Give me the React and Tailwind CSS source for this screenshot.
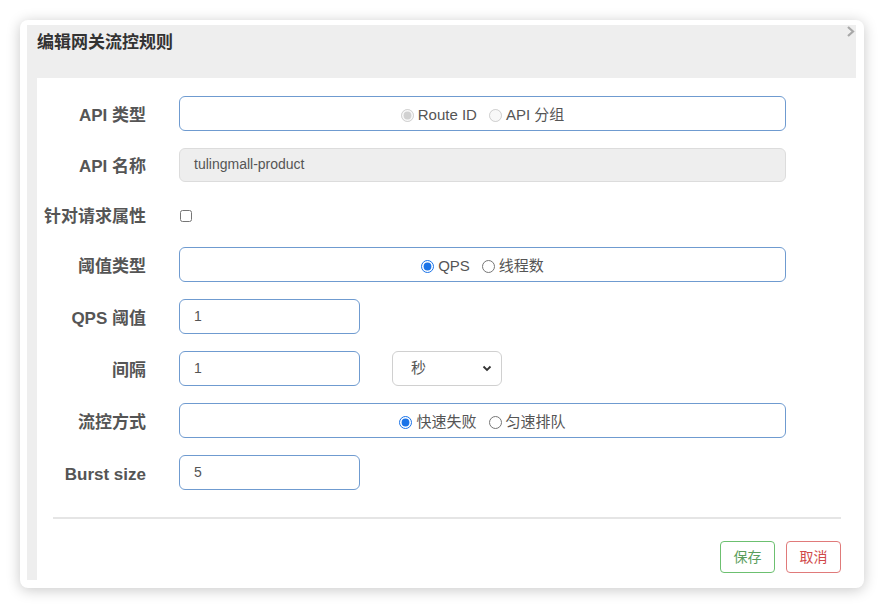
import React from "react";

const font = { fontFamily: '"Liberation Sans", Arial, "Noto Sans CJK SC", sans-serif' };

function Label({ children }) {
  return (
    <div className="w-[109px] shrink-0 text-right text-[17px] font-bold text-[#555] pt-[4px]">{children}</div>
  );
}

function Radio({ checked, disabled, label, name }) {
  return (
    <label className="flex items-center gap-[4px]">
      <input
        type="radio"
        name={name}
        defaultChecked={checked}
        disabled={disabled}
        className="w-[13px] h-[13px] m-0 accent-[#1a73e8]"
      />
      <span>{label}</span>
    </label>
  );
}

function RadioBox({ name, items }) {
  return (
    <div className="ml-[33px] w-[607px] h-[35px] rounded-[6px] border border-[#6f9bd0] flex items-center justify-center gap-[12px] pt-[3px] text-[15px] text-[#555]">
      {items.map((it, i) => (
        <Radio key={i} name={name} {...it} />
      ))}
    </div>
  );
}

function SmallInput({ value }) {
  return (
    <div className="ml-[33px] w-[181px] h-[35px] rounded-[6px] border border-[#6f9bd0] flex items-center pl-[14px] text-[14px] text-[#555]">
      {value}
    </div>
  );
}

export default function App() {
  return (
    <div className="w-[884px] h-[608px] bg-white pt-[20px] pl-[20px]" style={font}>
      <div className="w-[844px] h-[568px] bg-white rounded-[8px] shadow-[0_2px_14px_rgba(0,0,0,0.22)] overflow-hidden pt-[5px] pl-[7px]">
        <div className="relative w-[829px] h-[53px] bg-[#eeeeee] pl-[10px] pt-[6px] overflow-hidden">
          <div className="text-[17px] font-bold text-[#333] leading-[24px]">编辑网关流控规则</div>
          <svg className="absolute right-[1px] top-[1px]" width="8" height="11" viewBox="0 0 8 11">
            <path d="M1 1 L6 5.5 L1 10" fill="none" stroke="#a8a8a8" strokeWidth="2.2" />
          </svg>
        </div>
        <div className="flex">
          <div className="w-[10px] h-[502px] bg-[#eeeeee]" />
          <div className="flex-1 pt-[18px]">
            <div className="flex flex-col gap-[17px]">
              <div className="flex items-center h-[35px]">
                <Label>API 类型</Label>
                <RadioBox
                  name="apiType"
                  items={[
                    { label: "Route ID", checked: true, disabled: true },
                    { label: "API 分组", disabled: true },
                  ]}
                />
              </div>
              <div className="flex items-center h-[34px]">
                <Label>API 名称</Label>
                <div className="ml-[33px] w-[607px] h-[34px] rounded-[6px] border border-[#dcdcdc] bg-[#eeeeee] flex items-center pl-[14px] pb-[2px] text-[14px] text-[#555]">
                  tulingmall-product
                </div>
              </div>
              <div className="flex items-center h-[31px]">
                <Label>针对请求属性</Label>
                <input type="checkbox" className="ml-[34px] mt-[3px] w-[12px] h-[12px] m-0" />
              </div>
              <div className="flex items-center h-[35px]">
                <Label>阈值类型</Label>
                <RadioBox
                  name="grade"
                  items={[{ label: "QPS", checked: true }, { label: "线程数" }]}
                />
              </div>
              <div className="flex items-center h-[35px]">
                <Label>QPS 阈值</Label>
                <SmallInput value="1" />
              </div>
              <div className="flex items-center h-[35px]">
                <Label>间隔</Label>
                <SmallInput value="1" />
                <div className="ml-[32px] w-[110px] h-[35px] rounded-[6px] border border-[#d0d0d0] flex items-center justify-between pl-[18px] pr-[9px] text-[15px] text-[#555]">
                  <span>秒</span>
                  <svg width="10" height="7" viewBox="0 0 10 7">
                    <path d="M1.5 1.5 L5 5 L8.5 1.5" fill="none" stroke="#333" strokeWidth="1.8" />
                  </svg>
                </div>
              </div>
              <div className="flex items-center h-[35px]">
                <Label>流控方式</Label>
                <RadioBox
                  name="behavior"
                  items={[{ label: "快速失败", checked: true }, { label: "匀速排队" }]}
                />
              </div>
              <div className="flex items-center h-[35px]">
                <Label>Burst size</Label>
                <SmallInput value="5" />
              </div>
            </div>
            <div className="ml-[16px] mt-[27px] w-[788px] h-[2px] bg-[#e5e5e5]" />
            <div className="w-[804px] flex justify-end gap-[11px] mt-[22px]">
              <button className="w-[55px] h-[32px] rounded-[4px] border border-[#6cc070] text-[14px] text-[#5a9e5c] bg-white">
                保存
              </button>
              <button className="w-[55px] h-[32px] rounded-[4px] border border-[#e07a7a] text-[14px] text-[#d0494a] bg-white">
                取消
              </button>
            </div>
          </div>
        </div>
      </div>
    </div>
  );
}
